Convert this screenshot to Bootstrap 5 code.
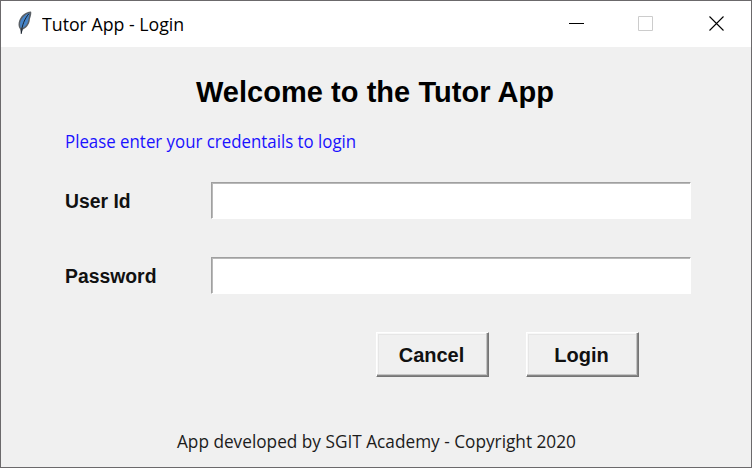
<!DOCTYPE html>
<html lang="en">
<head>
<meta charset="utf-8">
<meta name="viewport" content="width=device-width, initial-scale=1">
<title>Tutor App - Login</title>
<link href="https://cdn.jsdelivr.net/npm/bootstrap@5.3.0/dist/css/bootstrap.min.css" rel="stylesheet">
<style>
body{width:752px;height:468px;overflow:hidden;background:#f0f0f0;color:#000;font-family:"Open Sans","Noto Sans",sans-serif}
.app-window{height:468px;border:1px solid #6b696b}
.title-bar{height:46px;background:#fff;padding:0 27px 0 15px}
.title-text{font-size:18px;line-height:24px;margin-left:9px;transform:scaleX(.985);transform-origin:left}
.feather{margin-top:-2px}
.window-actions{gap:54px;margin-top:-1px}
.window-actions svg:last-child{margin-left:2px}
.welcome{font:bold 29px/36px "Liberation Sans",Arial,sans-serif;margin:27px 0 0 -2px;padding-bottom:1px;letter-spacing:.04px}
.hint{font-size:18px;line-height:24px;color:#1a12ff;margin:18px 0 29px 64px}
.hint .fit{transform:scaleX(.936);transform-origin:left}
.field-row{height:37px;padding:0 60px 0 64px;margin-bottom:38px}
.field-label{width:146px;font:bold 20px/24px "Liberation Sans",Arial,sans-serif;color:#111}
.field-label .fit{transform:scaleX(.968);transform-origin:left}
.field-box{height:37px;min-height:0;border:1px solid #fff;border-top-color:#a0a0a0;border-left-color:#a0a0a0;box-shadow:inset 1px 1px #b9b9b9;border-radius:0;background:#fff;padding:2px 6px}
.form-actions{gap:37px;margin:0 112px 0 0}
.tk-btn{width:113px;height:45px;padding:2px 0 0;border:1px solid #fff;border-right-color:#757575;border-bottom-color:#757575;box-shadow:inset -1px -1px #858585,inset -2px -2px #c4c4c4,inset 1px 1px #f8f8f8,inset 2px 2px #e6e6e6;border-radius:0;background:#f0f0f0;font:bold 20px/41px "Liberation Sans",Arial,sans-serif;color:#111}
.tk-btn .fit{padding-right:2px}
.credit{font-size:18px;line-height:24px;margin-top:52px;color:#1c1c1c}
.credit .fit{transform:scaleX(.957)}
.fit{display:inline-block;white-space:nowrap}
</style>
</head>
<body>
<div class="app-window d-flex flex-column">
  <header class="title-bar d-flex align-items-center justify-content-between">
    <div class="d-flex align-items-center">
      <svg class="feather" width="17" height="24" viewBox="0 0 17 24">
        <path d="M15 .6C9.2 1 4 5.4 2.7 11.4c-.5 3 .1 5 1.3 6.6L5.2 23l1.8-4.6c4.8-2.1 6.8-6.6 6.9-10.4C15 5 15.8 2 15 .6Z" fill="#5b6066"/>
        <path d="M13.6 2C8.6 3.4 4.8 8 4 12.4l.4 4.4L7.2 16.6C11.2 14.4 12.4 10.4 12.6 7Z" fill="#4684c8"/>
        <path d="M12.8 2.8C8.7 8 6 13.5 5.2 22.8" fill="none" stroke="#17212d" stroke-width="1"/>
      </svg>
      <span class="title-text fit">Tutor App - Login</span>
    </div>
    <div class="window-actions d-flex align-items-center">
      <svg width="15" height="15"><path d="M0 7.5h15" stroke="#000"/></svg>
      <svg width="15" height="15"><path d="M.5.5h14v14H.5Z" fill="none" stroke="#ccc"/></svg>
      <svg width="15" height="15"><path d="m.5.5 14 14m0-14-14 14" stroke="#000" stroke-width="1.1"/></svg>
    </div>
  </header>
  <main>
    <h1 class="welcome text-center"><span class="fit">Welcome to the Tutor App</span></h1>
    <p class="hint"><span class="fit">Please enter your credentails to login</span></p>
    <form>
      <div class="field-row d-flex align-items-center">
        <label class="field-label flex-shrink-0" for="user"><span class="fit">User Id</span></label>
        <input class="field-box form-control" id="user" type="text">
      </div>
      <div class="field-row d-flex align-items-center">
        <label class="field-label flex-shrink-0" for="pass"><span class="fit">Password</span></label>
        <input class="field-box form-control" id="pass" type="password">
      </div>
      <div class="form-actions d-flex justify-content-end">
        <button class="tk-btn btn" type="button"><span class="fit">Cancel</span></button>
        <button class="tk-btn btn" type="button"><span class="fit">Login</span></button>
      </div>
    </form>
    <p class="credit text-center mb-0"><span class="fit">App developed by SGIT Academy - Copyright 2020</span></p>
  </main>
</div>
<script src="https://cdn.jsdelivr.net/npm/bootstrap@5.3.0/dist/js/bootstrap.bundle.min.js"></script>
</body>
</html>
